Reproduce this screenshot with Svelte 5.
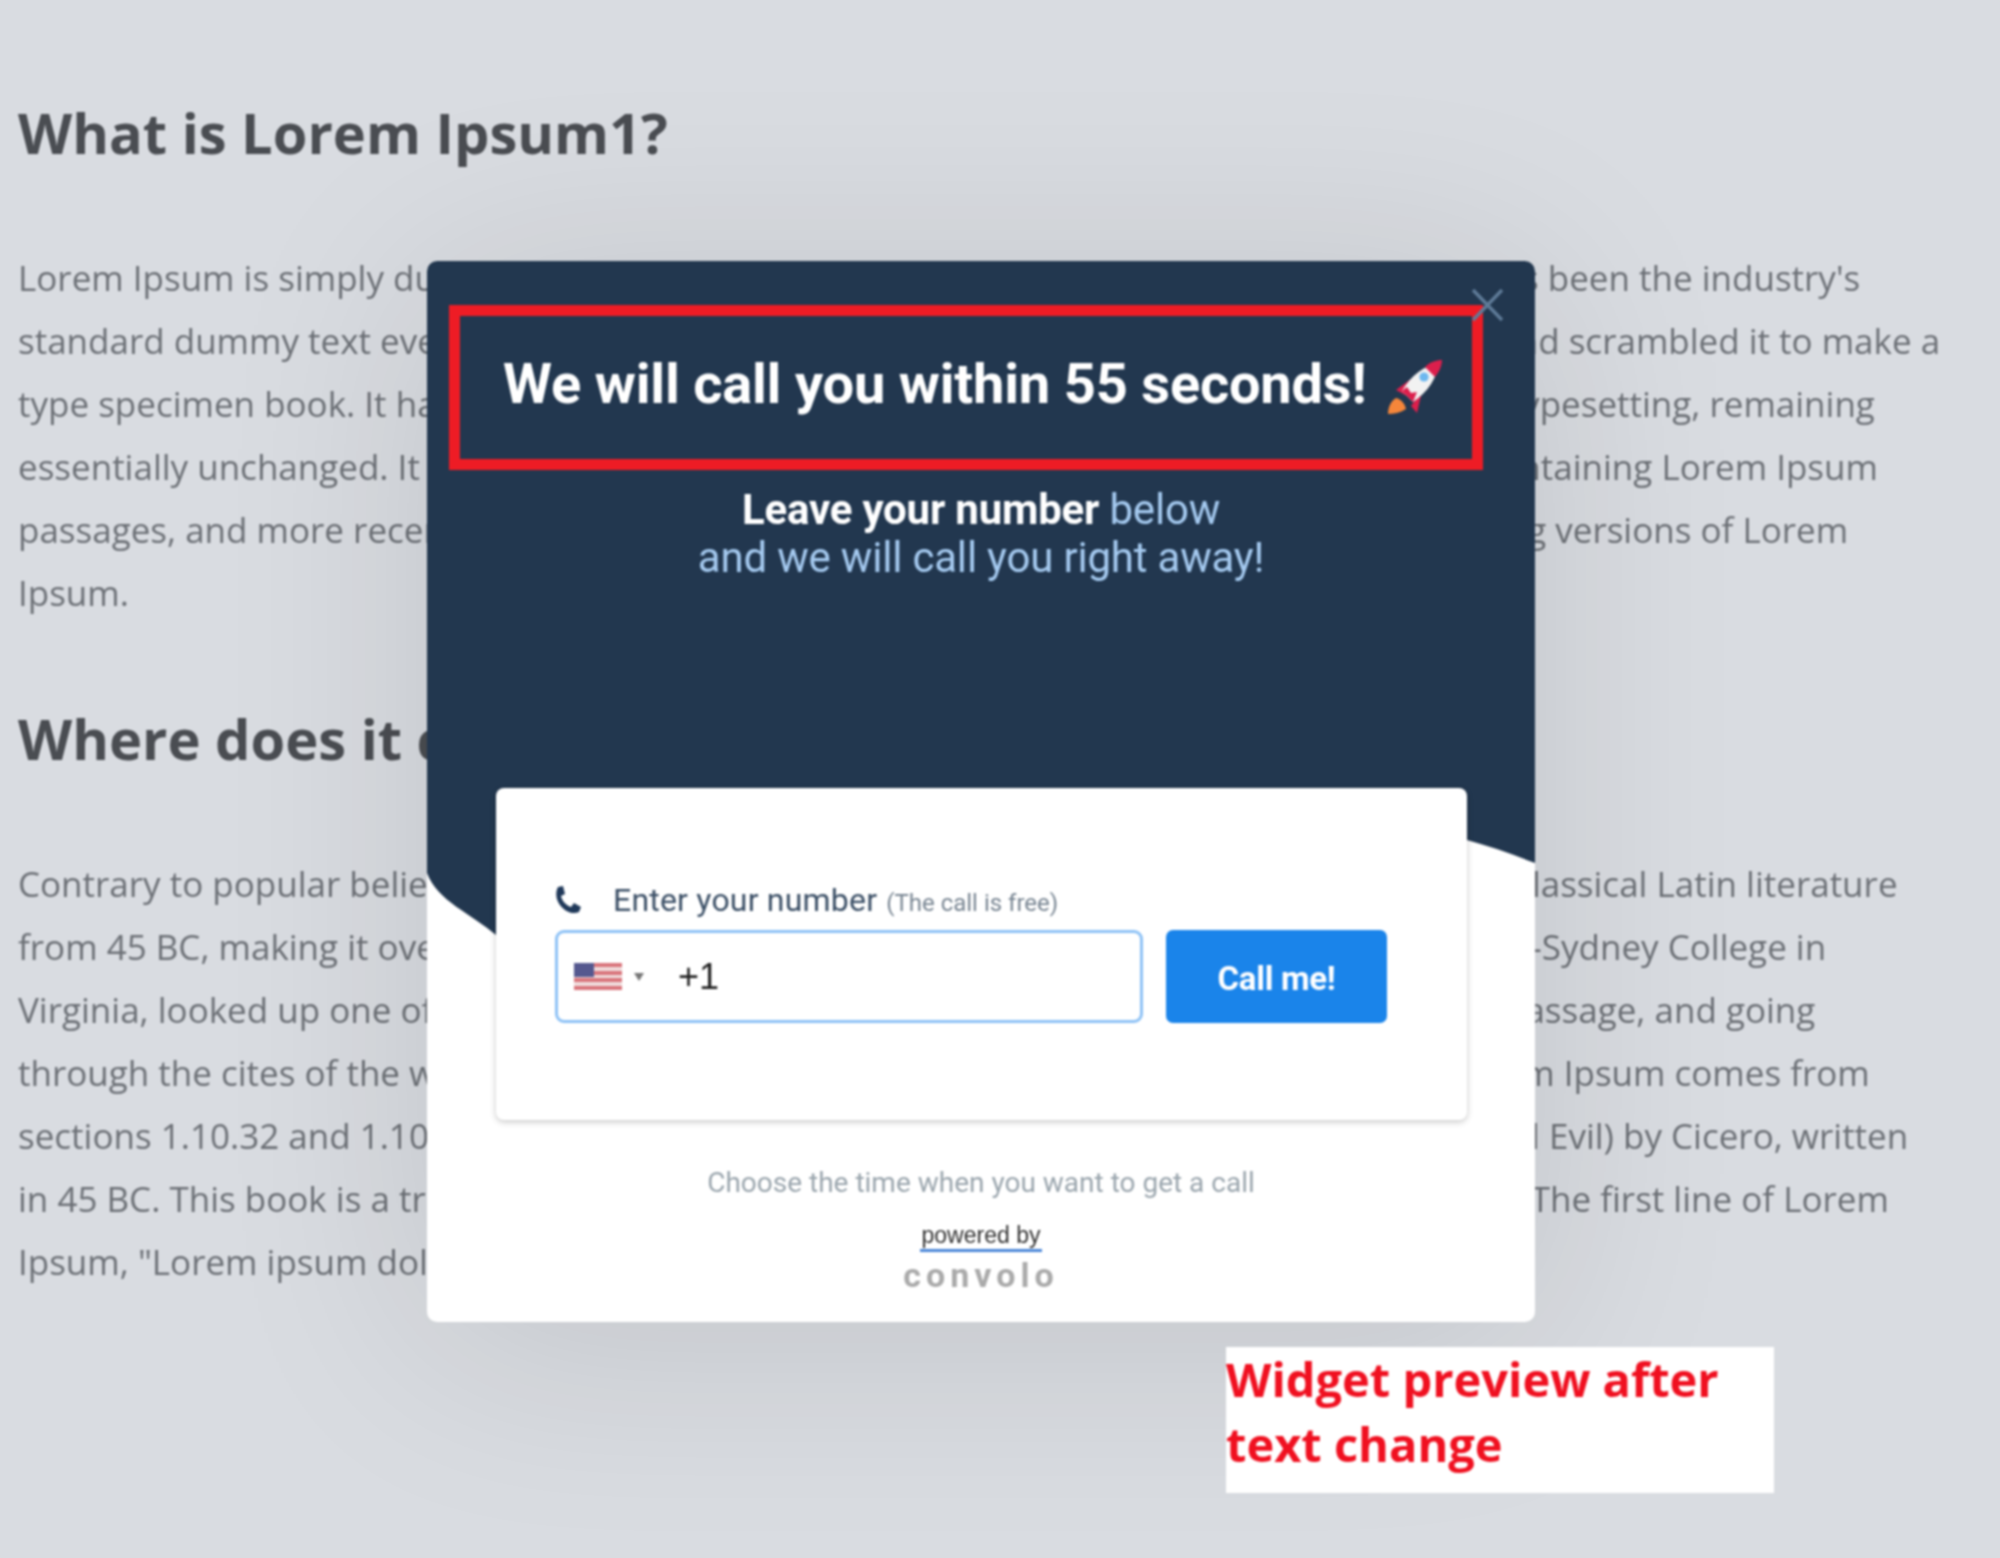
<script>
  const para1 = [
    "Lorem Ipsum is simply dummy text of the printing and typesetting industry. Lorem Ipsum has been the industry's",
    "standard dummy text ever since the 1500s, when an unknown printer took a galley of type and scrambled it to make a",
    "type specimen book. It has survived not only five centuries, but also the leap into electronic typesetting, remaining",
    "essentially unchanged. It was popularised in the 1960s with the release of Letraset sheets containing Lorem Ipsum",
    "passages, and more recently with desktop publishing software like Aldus PageMaker including versions of Lorem",
    "Ipsum."
  ];
  const para2 = [
    "Contrary to popular belief, Lorem Ipsum is not simply random text. It has roots in a piece of classical Latin literature",
    "from 45 BC, making it over 2000 years old. Richard McClintock, a Latin professor at Hampden-Sydney College in",
    "Virginia, looked up one of the more obscure Latin words, consectetur, from a Lorem Ipsum passage, and going",
    "through the cites of the word in classical literature, discovered the undoubtable source. Lorem Ipsum comes from",
    "sections 1.10.32 and 1.10.33 of \"de Finibus Bonorum et Malorum\" (The Extremes of Good and Evil) by Cicero, written",
    "in 45 BC. This book is a treatise on the theory of ethics, very popular during the Renaissance. The first line of Lorem",
    "Ipsum, \"Lorem ipsum dolor sit amet..\", comes from a line in section 1.10.32."
  ];
</script>

<div class="page">
  <article class="article">
    <h2>What is Lorem Ipsum1?</h2>
    <div class="para">
      {#each para1 as line}<div class="line">{line}</div>{/each}
    </div>
    <h2 class="second">Where does it come from?</h2>
    <div class="para">
      {#each para2 as line}<div class="line">{line}</div>{/each}
    </div>
  </article>

  <section class="modal">
    <svg class="wave" viewBox="0 0 1108 1061" preserveAspectRatio="none" aria-hidden="true">
      <path d="M0 0H1108V602C1085 593 1062 585 1040 579L500 720 100 700 69 674C45 653 10 640 0 612Z" fill="#22374f" />
    </svg>
    <svg class="close" viewBox="0 0 33 34" aria-hidden="true">
      <path d="M2 2L31 32M31 2L2 32" stroke="#5f7b98" stroke-width="3.4" fill="none" />
    </svg>

    <div class="content">
      <div class="banner">
        <h1>We will call you within 55 seconds!</h1>
        <svg class="rocket" viewBox="0 0 56 56" aria-hidden="true">
          <path d="M1 55C1 48 4 42 9 39C14 40 18 45 19 50C13 54 7 55 1 55Z" fill="#f5863a" />
          <path d="M9 31L24 20L20 37Z" fill="#dc1f4c" />
          <path d="M24 47L35 32L30 54Z" fill="#dc1f4c" />
          <path d="M51 5C38 6 24 16 15 32L26 43C41 33 50 19 51 5Z" fill="#f2f2f2" />
          <path d="M55 1C49 1 43 3 38 8L48 18C52 13 55 7 55 1Z" fill="#dc1f4c" />
          <path d="M15 32L20 28L24 34L30 33L26 43Z" fill="#dc1f4c" />
          <circle cx="37" cy="18" r="4.6" fill="#6db8ef" />
        </svg>
      </div>

      <p class="lead"><strong>Leave your number</strong> below<br />and we will call you right away!</p>

      <div class="card">
        <div class="label">
          <svg class="phone" viewBox="0 0 28 28" aria-hidden="true">
            <path d="M5 1L10 0L12 8L8 10C9 15 13 19 18 21L21 17L28 21L26 26C14 31 -2 15 5 1Z" fill="#20395a" />
          </svg>
          <span class="label-main">Enter your number</span>
          <span class="label-sub">(The call is free)</span>
        </div>
        <div class="controls">
          <div class="field">
            <svg class="flag" viewBox="0 0 48 27" aria-hidden="true">
              <rect width="48" height="27" fill="#f0dcdc" />
              <rect y="0" width="48" height="4" fill="#d9757c" />
              <rect y="8" width="48" height="4" fill="#d9757c" />
              <rect y="15" width="48" height="4" fill="#d9757c" />
              <rect y="23" width="48" height="4" fill="#d9757c" />
              <rect width="20" height="14" fill="#55588f" />
            </svg>
            <span class="caret"></span>
            <span class="dial">+1</span>
          </div>
          <button class="call" type="button">Call me!</button>
        </div>
      </div>

      <p class="hint">Choose the time when you want to get a call</p>
      <div class="powered">powered by</div>
      <div class="logo">convolo</div>
    </div>
  </section>

  <aside class="note">Widget preview after<br />text change</aside>
</div>

<style>
  :global(body) {
    margin: 0;
    background: #d9dce1;
  }
  .page {
    position: relative;
    width: 2000px;
    height: 1558px;
    overflow: hidden;
    background: #d9dce1;
    filter: blur(0.8px);
    font-family: "Open Sans", sans-serif;
  }
  .article {
    padding: 90px 0 0 18px;
    color: #6c7076;
  }
  h2 {
    margin: 0;
    font-size: 56px;
    line-height: 84px;
    font-weight: 700;
    color: #4a4d52;
  }
  .second {
    margin-top: 72px;
  }
  .para {
    margin-top: 72px;
    font-size: 35px;
    line-height: 63px;
  }
  .line {
    white-space: nowrap;
  }
  .modal {
    position: absolute;
    left: 427px;
    top: 261px;
    width: 1108px;
    height: 1061px;
    background: #fff;
    border-radius: 10px;
    overflow: hidden;
    box-shadow: 0 20px 220px rgba(0, 0, 0, 0.11);
    font-family: Roboto, sans-serif;
  }
  .wave {
    position: absolute;
    inset: 0;
    width: 100%;
    height: 100%;
  }
  .close {
    position: absolute;
    left: 1044px;
    top: 27px;
    width: 33px;
    height: 34px;
    z-index: 2;
  }
  .content {
    position: relative;
    display: flex;
    flex-direction: column;
    align-items: center;
  }
  .banner {
    box-sizing: border-box;
    align-self: flex-start;
    margin: 44px 0 0 22px;
    width: 1034px;
    height: 165px;
    border: 11px solid #ee1c25;
    display: flex;
    align-items: flex-start;
    padding: 33px 0 0 43px;
    gap: 21px;
  }
  h1 {
    margin: 0;
    font-size: 56px;
    line-height: 70px;
    font-weight: 700;
    color: #fff;
    white-space: nowrap;
    letter-spacing: -0.2px;
  }
  .rocket {
    width: 56px;
    height: 56px;
    flex: none;
    margin-top: 10px;
  }
  .lead {
    margin: 16px 0 0;
    font-size: 42px;
    line-height: 48px;
    text-align: center;
    color: #a5caf0;
    letter-spacing: -0.2px;
  }
  .lead strong {
    color: #fff;
    font-weight: 700;
  }
  .card {
    box-sizing: border-box;
    align-self: flex-start;
    margin: 206px 0 0 69px;
    width: 971px;
    height: 332px;
    background: #fff;
    border-radius: 8px;
    box-shadow: 0 2px 6px rgba(0, 0, 0, 0.22);
    padding: 92px 0 0 59px;
  }
  .label {
    display: flex;
    align-items: center;
    height: 40px;
    color: #3b4f66;
  }
  .phone {
    width: 28px;
    height: 28px;
    flex: none;
    margin-right: 32px;
    margin-left: -2px;
  }
  .label-main {
    font-size: 32px;
    letter-spacing: 0.2px;
  }
  .label-sub {
    margin-left: 9px;
    font-size: 24px;
    color: #788592;
    padding-top: 5px;
  }
  .controls {
    display: flex;
    gap: 23px;
    margin-top: 10px;
  }
  .field {
    box-sizing: border-box;
    width: 588px;
    height: 93px;
    border: 3px solid #8ec2f6;
    border-radius: 9px;
    display: flex;
    align-items: center;
    padding-left: 16px;
  }
  .flag {
    width: 48px;
    height: 27px;
    flex: none;
  }
  .caret {
    width: 0;
    height: 0;
    margin-left: 12px;
    border-left: 5px solid transparent;
    border-right: 5px solid transparent;
    border-top: 8px solid #777;
  }
  .dial {
    margin-left: 34px;
    font-size: 36px;
    font-family: "Liberation Sans", sans-serif;
    color: #222;
  }
  .call {
    width: 221px;
    height: 93px;
    border: none;
    border-radius: 7px;
    background: #1a84ea;
    color: #fff;
    font-family: Roboto, sans-serif;
    font-size: 33px;
    font-weight: 700;
    letter-spacing: -0.3px;
    padding: 4px 0 0;
  }
  .hint {
    margin: 46px 0 0;
    font-size: 28px;
    line-height: 34px;
    color: #9aa5ad;
  }
  .powered {
    margin-top: 21px;
    padding: 0 2px;
    font-family: "Liberation Sans", sans-serif;
    font-size: 23px;
    line-height: 28px;
    color: #333;
    border-bottom: 3px solid #4a86d8;
  }
  .logo {
    margin-top: 5px;
    font-family: Roboto, sans-serif;
    font-weight: 700;
    font-size: 34px;
    line-height: 36px;
    letter-spacing: 5px;
    color: #aaa;
  }
  .note {
    position: absolute;
    left: 1226px;
    top: 1347px;
    box-sizing: border-box;
    width: 548px;
    height: 146px;
    background: #fff;
    font-family: "Open Sans", sans-serif;
    font-size: 47px;
    line-height: 65px;
    font-weight: 700;
    color: #f01020;
  }
</style>
